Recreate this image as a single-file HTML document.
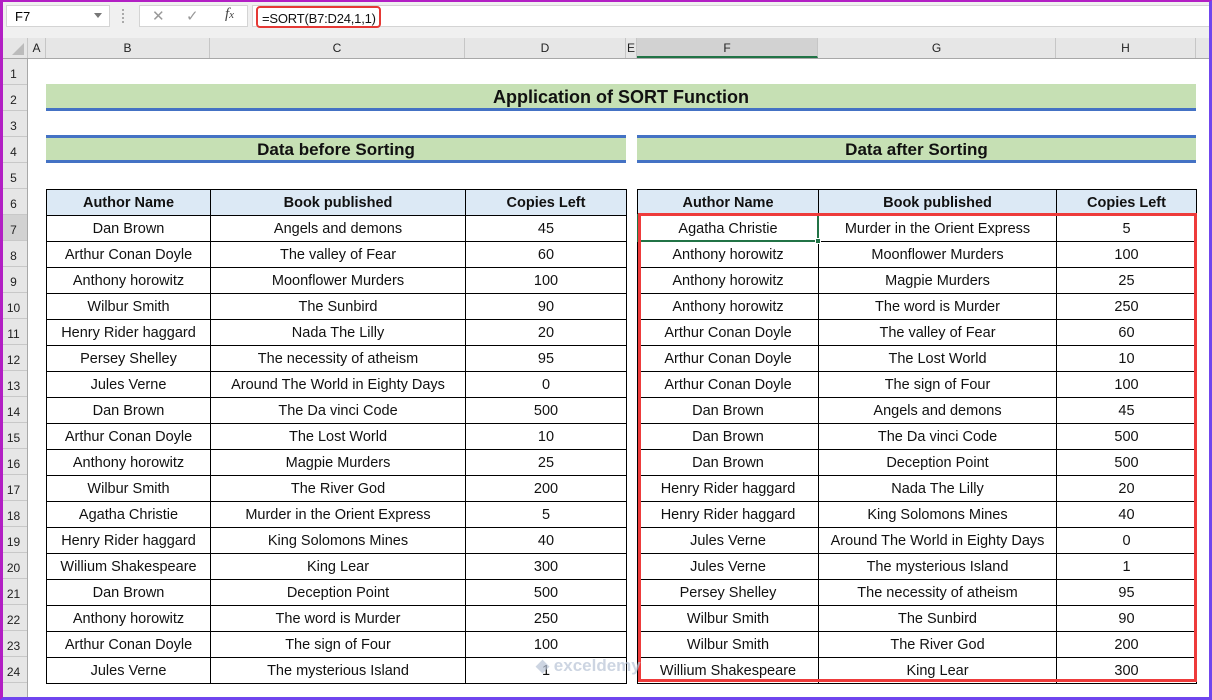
<!DOCTYPE html>
<html><head><meta charset="utf-8"><style>
*{margin:0;padding:0;box-sizing:border-box}
body{width:1212px;height:700px;overflow:hidden;background:#fff;font-family:"Liberation Sans",sans-serif;position:relative}
.frame{position:absolute;left:0;top:0;width:1212px;height:700px;border-left:3px solid #b21fc4;border-top:2px solid #b21fc4;border-right:3px solid #7046ee;border-bottom:3px solid #7046ee;z-index:50;pointer-events:none}
.a{position:absolute}
.top{left:0;top:0;width:1212px;height:38px;background:#f0f0f0}
.box{background:#fff;border:1px solid #d4d4d4}
.colh{left:0;top:38px;width:1212px;height:21px;background:#e6e6e6;border-bottom:1px solid #a8a8a8}
.ch{position:absolute;top:0;height:20px;border-right:1px solid #c6c6c6;font-size:12px;color:#222;text-align:center;line-height:20px}
.rowh{left:0;top:59px;width:28px;height:641px;background:#e6e6e6;border-right:1px solid #a8a8a8}
.rh{position:absolute;left:0;width:27px;height:26px;border-bottom:1px solid #c8c8c8;font-size:12px;color:#222;text-align:center;line-height:30px}
table{position:absolute;border-collapse:collapse;table-layout:fixed}
td{border:1px solid #000;height:26px;text-align:center;font-size:14.5px;color:#111;padding:0;white-space:nowrap;overflow:hidden}
th{border:1px solid #000;height:26px;text-align:center;font-size:14.5px;background:#dce9f5;font-weight:bold;color:#111}
.band{background:#c6e0b4;font-weight:bold;text-align:center;color:#111}
</style></head><body>
<div class="a top"></div>
<div class="a box" style="left:6px;top:5px;width:104px;height:22px;font-size:13px;padding:3px 0 0 8px">F7</div>
<div class="a" style="left:94px;top:13px;border-left:4px solid transparent;border-right:4px solid transparent;border-top:5px solid #777"></div>
<div class="a" style="left:122px;top:9px;width:2px;height:14px;border-left:2px dotted #aaa"></div>
<div class="a box" style="left:139px;top:5px;width:109px;height:22px;font-size:15px;color:#999">
<span class="a" style="left:12px;top:1px">✕</span><span class="a" style="left:46px;top:1px">✓</span><span class="a" style="left:85px;top:0;color:#444;font-family:'Liberation Serif',serif;font-style:italic;font-size:15px">f<span style="font-size:11px">x</span></span></div>
<div class="a box" style="left:252px;top:5px;width:960px;height:22px"></div>
<div class="a" style="left:256px;top:6px;width:125px;height:22px;border:2px solid #e53935;border-radius:4px;font-size:13px;letter-spacing:-0.2px;padding:3px 0 0 4px;color:#111;white-space:nowrap">=SORT(B7:D24,1,1)</div>
<div class="a colh">
<div class="ch" style="left:0;width:28px"><div class="a" style="right:3px;bottom:3px;border-left:12px solid transparent;border-bottom:12px solid #bbb"></div></div>
<div class="ch" style="left:28px;width:18px">A</div>
<div class="ch" style="left:46px;width:164px">B</div>
<div class="ch" style="left:210px;width:255px">C</div>
<div class="ch" style="left:465px;width:161px">D</div>
<div class="ch" style="left:626px;width:11px">E</div>
<div class="ch" style="left:637px;width:181px;background:#d2d2d2;border-bottom:2px solid #217346">F</div>
<div class="ch" style="left:818px;width:238px">G</div>
<div class="ch" style="left:1056px;width:140px">H</div>
</div>
<div class="a rowh">
<div class="rh" style="top:0">1</div><div class="rh" style="top:26px">2</div><div class="rh" style="top:52px">3</div><div class="rh" style="top:78px">4</div><div class="rh" style="top:104px">5</div><div class="rh" style="top:130px">6</div><div class="rh" style="top:156px;background:#d2d2d2">7</div><div class="rh" style="top:182px">8</div><div class="rh" style="top:208px">9</div><div class="rh" style="top:234px">10</div><div class="rh" style="top:260px">11</div><div class="rh" style="top:286px">12</div><div class="rh" style="top:312px">13</div><div class="rh" style="top:338px">14</div><div class="rh" style="top:364px">15</div><div class="rh" style="top:390px">16</div><div class="rh" style="top:416px">17</div><div class="rh" style="top:442px">18</div><div class="rh" style="top:468px">19</div><div class="rh" style="top:494px">20</div><div class="rh" style="top:520px">21</div><div class="rh" style="top:546px">22</div><div class="rh" style="top:572px">23</div><div class="rh" style="top:598px">24</div>
</div>
<div class="a band" style="left:46px;top:84px;width:1150px;height:27px;border-bottom:3px solid #4472c4;font-size:18px;line-height:27px">Application of SORT Function</div>
<div class="a band" style="left:46px;top:135px;width:580px;height:28px;border-top:3px solid #4472c4;border-bottom:3px solid #4472c4;font-size:17px;line-height:23px">Data before Sorting</div>
<div class="a band" style="left:637px;top:135px;width:559px;height:28px;border-top:3px solid #4472c4;border-bottom:3px solid #4472c4;font-size:17px;line-height:23px">Data after Sorting</div>

<table style="left:46px;top:189px;width:580px">
<colgroup><col style="width:164px"><col style="width:255px"><col style="width:161px"></colgroup>
<tr><th>Author Name</th><th>Book published</th><th>Copies Left</th></tr>
<tr><td>Dan Brown</td><td>Angels and demons</td><td>45</td></tr>
<tr><td>Arthur Conan Doyle</td><td>The valley of Fear</td><td>60</td></tr>
<tr><td>Anthony horowitz</td><td>Moonflower Murders</td><td>100</td></tr>
<tr><td>Wilbur Smith</td><td>The Sunbird</td><td>90</td></tr>
<tr><td>Henry Rider haggard</td><td>Nada The Lilly</td><td>20</td></tr>
<tr><td>Persey Shelley</td><td>The necessity of atheism</td><td>95</td></tr>
<tr><td>Jules Verne</td><td>Around The World in Eighty Days</td><td>0</td></tr>
<tr><td>Dan Brown</td><td>The Da vinci Code</td><td>500</td></tr>
<tr><td>Arthur Conan Doyle</td><td>The Lost World</td><td>10</td></tr>
<tr><td>Anthony horowitz</td><td>Magpie Murders</td><td>25</td></tr>
<tr><td>Wilbur Smith</td><td>The River God</td><td>200</td></tr>
<tr><td>Agatha Christie</td><td>Murder in the Orient Express</td><td>5</td></tr>
<tr><td>Henry Rider haggard</td><td>King Solomons Mines</td><td>40</td></tr>
<tr><td>Willium Shakespeare</td><td>King Lear</td><td>300</td></tr>
<tr><td>Dan Brown</td><td>Deception Point</td><td>500</td></tr>
<tr><td>Anthony horowitz</td><td>The word is Murder</td><td>250</td></tr>
<tr><td>Arthur Conan Doyle</td><td>The sign of Four</td><td>100</td></tr>
<tr><td>Jules Verne</td><td>The mysterious Island</td><td>1</td></tr>
</table>

<table style="left:637px;top:189px;width:559px">
<colgroup><col style="width:181px"><col style="width:238px"><col style="width:140px"></colgroup>
<tr><th>Author Name</th><th>Book published</th><th>Copies Left</th></tr>
<tr><td>Agatha Christie</td><td>Murder in the Orient Express</td><td>5</td></tr>
<tr><td>Anthony horowitz</td><td>Moonflower Murders</td><td>100</td></tr>
<tr><td>Anthony horowitz</td><td>Magpie Murders</td><td>25</td></tr>
<tr><td>Anthony horowitz</td><td>The word is Murder</td><td>250</td></tr>
<tr><td>Arthur Conan Doyle</td><td>The valley of Fear</td><td>60</td></tr>
<tr><td>Arthur Conan Doyle</td><td>The Lost World</td><td>10</td></tr>
<tr><td>Arthur Conan Doyle</td><td>The sign of Four</td><td>100</td></tr>
<tr><td>Dan Brown</td><td>Angels and demons</td><td>45</td></tr>
<tr><td>Dan Brown</td><td>The Da vinci Code</td><td>500</td></tr>
<tr><td>Dan Brown</td><td>Deception Point</td><td>500</td></tr>
<tr><td>Henry Rider haggard</td><td>Nada The Lilly</td><td>20</td></tr>
<tr><td>Henry Rider haggard</td><td>King Solomons Mines</td><td>40</td></tr>
<tr><td>Jules Verne</td><td>Around The World in Eighty Days</td><td>0</td></tr>
<tr><td>Jules Verne</td><td>The mysterious Island</td><td>1</td></tr>
<tr><td>Persey Shelley</td><td>The necessity of atheism</td><td>95</td></tr>
<tr><td>Wilbur Smith</td><td>The Sunbird</td><td>90</td></tr>
<tr><td>Wilbur Smith</td><td>The River God</td><td>200</td></tr>
<tr><td>Willium Shakespeare</td><td>King Lear</td><td>300</td></tr>
</table>
<div class="a" style="left:637px;top:214px;width:182px;height:28px;border:2px solid #217346"></div>
<div class="a" style="left:815px;top:238px;width:6px;height:6px;background:#217346;border:1px solid #fff"></div>
<div class="a" style="left:638px;top:213px;width:559px;height:469px;border:3px solid #ee3b3b"></div>
<div class="a" style="left:536px;top:656px;font-size:17px;font-weight:bold;color:#b8c4d6;opacity:.7">◆ exceldemy</div>
<div class="frame"></div>
</body></html>
